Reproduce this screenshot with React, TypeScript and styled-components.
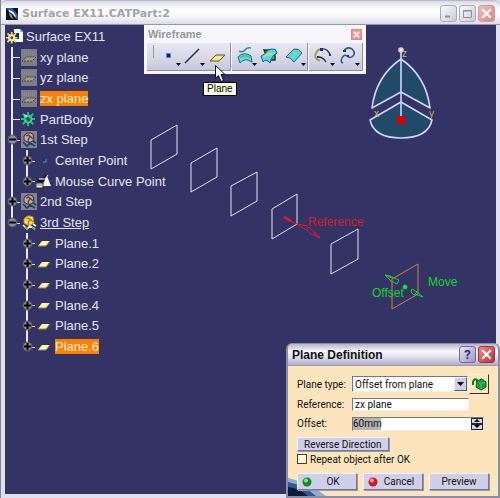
import React from "react";
import styled, { createGlobalStyle, css } from "styled-components";

const GlobalStyle = createGlobalStyle`
  * { box-sizing: border-box; }
  body {
    margin: 0;
    font-family: "Liberation Sans", Arial, sans-serif;
    overflow: hidden;
  }
  button, input, select { font: inherit; color: inherit; margin: 0; padding: 0; }
`;

/* ---------- application window ---------- */

const AppWindow = styled.div`
  position: relative;
  display: flex;
  flex-direction: column;
  height: 100vh;
  background: #dfe0ee;
  border-left: 1px solid #85858b;
  padding: 0 4px 4px;
`;

const TitleBar = styled.header`
  display: flex;
  align-items: center;
  gap: 4px;
  height: 25px;
  flex: none;
  margin: 0 -4px;
  padding: 2px 5px 0 5px;
  border-top: 1px solid #b9b9c4;
  border-bottom: 1px solid #9a9aa5;
  border-radius: 6px 6px 0 0;
  background: linear-gradient(#d9dae6, #ffffff 35%, #f8f8fb 65%, #dcdce6);
`;

const WindowTitle = styled.h1`
  flex: 1;
  margin: 0;
  font-family: "DejaVu Sans", Verdana, sans-serif;
  font-size: 11px;
  line-height: 16px;
  font-weight: bold;
  color: #a2a2a8;
  white-space: nowrap;
`;

const WindowButtons = styled.div`
  display: flex;
  gap: 2px;
`;

const CaptionButton = styled.button<{ $close?: boolean }>`
  display: grid;
  place-items: center;
  width: 17px;
  height: 17px;
  border: 1px solid ${(p) => (p.$close ? "#c99ba3" : "#a9aab8")};
  border-radius: 3px;
  background: ${(p) => (p.$close ? "linear-gradient(135deg, #f0bdbb, #dc8583)" : "linear-gradient(135deg, #fbfbfd, #c9cad8)")};
`;

const Viewport = styled.main`
  position: relative;
  flex: 1;
  min-height: 0;
  padding-left: 1px;
  background: #333366;
`;

/* ---------- specification tree ---------- */

const TreeRoot = styled.div`
  display: flex;
  align-items: center;
  gap: 3px;
  height: 22px;
  color: #e3e3f3;
  font-size: 13px;
`;

const Tree = styled.ul`
  display: grid;
  grid-auto-rows: 1fr;
  height: 310px;
  width: max-content;
  margin: 0;
  padding: 0;
  list-style: none;
`;

const TreeRow = styled.li`
  display: flex;
  align-items: center;
  color: #e3e3f3;
  font-size: 13px;
  line-height: 15px;
`;

const Guide = styled.span<{ $line: "none" | "through" | "tee" | "end" }>`
  position: relative;
  display: flex;
  align-items: center;
  align-self: stretch;
  width: 15px;
  ${(p) =>
    p.$line !== "none" &&
    css`
      &::before {
        content: "";
        position: absolute;
        left: 5px;
        top: 0;
        width: 2px;
        height: ${p.$line === "end" ? "50%" : "100%"};
        background: #e6e6ee;
      }
    `}
  ${(p) =>
    (p.$line === "tee" || p.$line === "end") &&
    css`
      &::after {
        content: "";
        position: absolute;
        left: 6px;
        right: 1px;
        top: 50%;
        height: 1px;
        background: #e6e6ee;
      }
    `}
`;

const Toggle = styled.button`
  position: relative;
  z-index: 1;
  display: flex;
  width: 11px;
  height: 11px;
  margin-left: 1px;
  border: 0;
  border-radius: 50%;
  background: none;
`;

const RowIcon = styled.span`
  display: flex;
  width: 16px;
  margin-right: 3px;
`;

const RowLabel = styled.span<{ $selected?: boolean; $active?: boolean }>`
  white-space: nowrap;
  ${(p) => p.$selected && "background: #ff7f00; color: #fff0dc;"}
  ${(p) => p.$active && "text-decoration: underline;"}
`;

/* ---------- floating toolbar ---------- */

const FloatingToolbar = styled.section`
  position: absolute;
  left: 139px;
  top: 0;
  width: 222px;
  padding: 0 3px 3px;
  background: #f7f7fb;
`;

const ToolbarHeader = styled.div`
  display: flex;
  align-items: center;
  justify-content: space-between;
  height: 18px;
  padding: 0 1px;
  color: #96969c;
  font-size: 11px;
  font-weight: bold;
`;

const ToolbarClose = styled.button`
  display: grid;
  place-items: center;
  width: 11px;
  height: 11px;
  border: 1px solid #d3898a;
  background: #e59a98;
`;

const ToolGroups = styled.div`
  display: grid;
  grid-template-columns: 85fr 77fr 54fr;
  gap: 1px;
`;

const ToolGroup = styled.div<{ $grip?: boolean }>`
  display: flex;
  justify-content: space-around;
  height: 28px;
  padding-left: ${(p) => (p.$grip ? "12px" : "2px")};
  border-right: 1px solid #8e8ea6;
  border-bottom: 1px solid #8e8ea6;
  background: ${(p) =>
    p.$grip
      ? "linear-gradient(#9797ad, #9797ad) 6px 2px / 1px 13px no-repeat, linear-gradient(#e9e9f3, #c8c8dc)"
      : "linear-gradient(#e9e9f3, #c8c8dc)"};
`;

const Tool = styled.button`
  display: flex;
  border: 0;
  background: none;
`;

const ToolTip = styled.div`
  position: absolute;
  left: 198px;
  top: 57px;
  padding: 0 3px;
  border: 1px solid #000;
  background: #ffffe1;
  color: #000;
  font-size: 10px;
  line-height: 12px;
`;

const Cursor = styled.svg`
  position: absolute;
  left: 210px;
  top: 40px;
`;

const Scene = styled.svg`
  position: absolute;
  left: 0;
  top: 0;
  pointer-events: none;
  font-size: 12px;
`;

/* ---------- dialog ---------- */

const Dialog = styled.form`
  position: absolute;
  right: 0;
  bottom: 0;
  width: 214px;
  border: 2px solid #8b8ca6;
  border-top-width: 1px;
  border-radius: 6px 6px 0 0;
  background: #fce4bc;
  overflow: hidden;
  color: #111;
  font-family: "Roboto", "Liberation Sans", sans-serif;
  font-size: 10px;
`;

const DialogHeader = styled.div`
  display: flex;
  align-items: center;
  gap: 2px;
  height: 22px;
  padding: 0 3px 0 4px;
  border-bottom: 1px solid #9a9ab2;
  background: linear-gradient(#b4b4cb, #f8f8fc 35%, #e3e3ee 60%, #adadc6);
`;

const DialogTitle = styled.h2`
  flex: 1;
  margin: 0;
  font-family: "Liberation Sans", Arial, sans-serif;
  font-size: 12px;
  white-space: nowrap;
`;

const DialogButton = styled.button<{ $close?: boolean }>`
  display: grid;
  place-items: center;
  width: 17px;
  height: 17px;
  border: 1px solid ${(p) => (p.$close ? "#a03038" : "#6c6c98")};
  border-radius: 3px;
  background: ${(p) => (p.$close ? "linear-gradient(135deg, #ee8b88, #c22e32)" : "linear-gradient(135deg, #e6e6f6, #9a9ac6)")};
  color: #30306c;
  font-size: 13px;
  font-weight: bold;
  line-height: 14px;
`;

const DialogBody = styled.div`
  position: relative;
  display: flex;
  flex-direction: column;
  padding: 8px 9px 6px;
`;

const Fields = styled.div`
  display: grid;
  grid-template-columns: 55px 1fr 20px;
  grid-template-rows: 20px 21px 17px;
  align-items: center;
`;

const FieldLabel = styled.label`
  white-space: nowrap;
`;

const sunken = css`
  border: 1px solid;
  border-color: #77777c #f4f0e0 #f4f0e0 #77777c;
  background: #fff;
`;

const SelectBox = styled.div`
  position: relative;
  display: flex;
  margin-right: 1px;
`;

const SelectInput = styled.select`
  ${sunken}
  appearance: none;
  width: 100%;
  height: 16px;
  padding: 0 14px 0 2px;
  border-radius: 0;
`;

const SelectArrow = styled.span`
  position: absolute;
  right: 1px;
  top: 1px;
  display: grid;
  place-items: center;
  width: 13px;
  height: 14px;
  border: 1px solid;
  border-color: #f3f3fc #55556c #55556c #f3f3fc;
  background: #cfcfe6;
  pointer-events: none;
`;

const BodyButton = styled.button`
  display: grid;
  place-items: center;
  width: 20px;
  height: 20px;
  border: 1px solid;
  border-color: #fff6df #33312c #33312c #fff6df;
  background: #fce4bc;
`;

const ReferenceInput = styled.input`
  ${sunken}
  grid-column: 2 / 4;
  min-width: 0;
  height: 13px;
  margin-right: 20px;
  padding: 0 2px;
`;

const SpinBox = styled.div`
  ${sunken}
  grid-column: 2 / 4;
  display: flex;
  height: 14px;
  margin-right: 5px;
`;

const SpinInput = styled.input`
  flex: 1;
  min-width: 0;
  width: 0;
  border: 0;
  background: linear-gradient(#b4b4b8, #b4b4b8) 0 0 / 28px 100% no-repeat;
`;

const SpinButtons = styled.div`
  display: flex;
  flex-direction: column;
  width: 12px;
`;

const SpinButton = styled.button`
  display: grid;
  place-items: center;
  flex: 1;
  border: 1px solid #222;
  background: #d6d6e8;
`;

const PushButton = styled.button<{ $lamp?: boolean }>`
  display: flex;
  align-items: center;
  justify-content: center;
  position: relative;
  height: 17px;
  padding-left: ${(p) => (p.$lamp ? "12px" : "0")};
  border: 1px solid;
  border-color: #f2f2fd #77779b #77779b #f2f2fd;
  background: #cfcfe9;
  box-shadow: 1px 1px 0 #9a93a4;
  white-space: nowrap;
`;

const ReverseButton = styled(PushButton)`
  align-self: flex-start;
  height: 14px;
  padding: 0 6px;
  margin: 5px 0 2px;
`;

const CheckRow = styled.label`
  display: flex;
  align-items: center;
  gap: 3px;
  height: 12px;
`;

const CheckBox = styled.input`
  appearance: none;
  width: 10px;
  height: 10px;
  border: 1px solid #44443f;
  background: #fff9e0;
`;

const DialogActions = styled.div`
  display: grid;
  grid-template-columns: repeat(3, 1fr);
  gap: 6px;
  margin-top: 8px;
`;

const Lamp = styled.svg`
  position: absolute;
  left: 4px;
  top: 3px;
`;

const CornerArt = styled.svg`
  position: absolute;
  left: 0;
  bottom: 0;
`;

/* ---------- icons ---------- */

const CatiaIcon = () => (
  <svg width="12" height="12" viewBox="0 0 12 12">
    <rect width="12" height="12" fill="#08142c" />
    <path d="M0 0 H6 L12 7 V12 L4 5 Z" fill="#2463a0" />
    <path d="M3 2 Q9 3 10 10 Q6 4 3 4Z" fill="#f5f4e4" />
    <path d="M3 5 Q6 6 7 11 Q3 9 3 5Z" fill="#d98030" />
  </svg>
);

const Cross = ({ size = 9 }: { size?: number }) => (
  <svg width={size} height={size} viewBox="0 0 9 9">
    <path d="M1 1 L8 8 M8 1 L1 8" stroke="#fff" strokeWidth="1.8" />
  </svg>
);

const gear = "M8 0 V16 M0 8 H16 M2 2 L14 14 M14 2 L2 14";

const RootIcon = () => (
  <svg width="17" height="17" viewBox="0 0 17 17">
    <path d="M8 1 H14 L17 4 V14 H8Z" fill="#fafdff" />
    <path d="M14 1 V4 H17" fill="#5bc8dc" />
    <path d="M8 5 H13 V11 H8Z" fill="#182840" />
    <g transform="translate(0 4) scale(.72)">
      <path d={gear} stroke="#f1dc76" strokeWidth="2.4" />
      <circle cx="8" cy="8" r="5" fill="#f6e9a0" />
      <circle cx="8" cy="8" r="2" fill="#4d4740" />
    </g>
  </svg>
);

const RefPlaneIcon = () => (
  <svg width="16" height="17" viewBox="0 0 16 17">
    <rect width="16" height="17" fill="#7c7d88" />
    <path d="M1 12 L6 8 H15 L11 12Z" fill="#a59e78" stroke="#3c3d42" strokeDasharray="2 1" />
    <path d="M1 5 H15 M1 3 H15" stroke="#90919a" strokeDasharray="1 1" />
  </svg>
);

const BodyIcon = () => (
  <svg width="14" height="14" viewBox="0 0 16 16">
    <path d={gear} stroke="#27b987" strokeWidth="2.2" />
    <circle cx="8" cy="8" r="5" fill="#35cf94" />
    <path d="M8 5 V11 M5 8 H11 M6 6 L10 10" stroke="#063f38" strokeWidth="1.4" />
    <path d="M4 3 L7 6" stroke="#baffdf" strokeWidth="1.6" />
  </svg>
);

const StepIcon = ({ active }: { active?: boolean }) => (
  <svg width="16" height="17" viewBox="0 0 16 17">
    {!active && <rect width="16" height="17" fill="#83838f" />}
    <path d="M3 5 Q6 0 12 3 L13 9 L8 12 L3 9Z" fill={active ? "#ffe36a" : "#b6aeb0"} stroke={active ? "#c28a20" : "#303040"} />
    <path d="M5 5 Q8 3 9 6 Q6 9 8 11 M9 5 L12 8" fill="none" stroke={active ? "#d7681e" : "#7c3328"} strokeWidth="1.4" />
    <path d="M2 11 L6 15 L9 12 L14 15 M12 10 L15 12" fill="none" stroke={active ? "#fff3b0" : "#263c5c"} strokeWidth="1.6" />
    {active && <path d="M4 13 L7 16 M11 13 L14 16" stroke="#5b9b90" strokeWidth="1.4" />}
  </svg>
);

const PointIcon = () => (
  <svg width="16" height="14" viewBox="0 0 16 14">
    <rect x="7" y="5" width="3" height="3" fill="#0c3470" />
    <path d="M10 5 V8 H7" fill="none" stroke="#4c9cc8" />
  </svg>
);

const MouseCurveIcon = () => (
  <svg width="16" height="15" viewBox="0 0 16 15">
    <path d="M6 12 L11 2 L15 12Z" fill="#fff" />
    <path d="M1 7 H7 L10 1" fill="none" stroke="#111" strokeWidth="2" />
    <path d="M3 5 L9 5 L12 1" fill="none" stroke="#fff" />
    <rect x="0" y="9" width="7" height="5" fill="#f5f5f5" stroke="#222" />
    <path d="M1 11 H6" stroke="#777" />
  </svg>
);

const PlaneIcon = () => (
  <svg width="16" height="12" viewBox="0 0 16 12">
    <path d="M2 9 L6 4 H14 L10 9Z" fill="#fff7a0" />
    <path d="M2 9 H10 L14 4" fill="none" stroke="#8b8750" />
  </svg>
);

const ToggleIcon = ({ open }: { open?: boolean }) => (
  <svg width="11" height="11" viewBox="0 0 11 11">
    <circle cx="5.5" cy="5.5" r="4.5" fill="#8a8a92" stroke="#55555e" />
    <path d={open ? "M2 5.5 H9" : "M2 5.5 H9 M5.5 2 V9"} stroke="#050508" strokeWidth="2" />
  </svg>
);

const Drop = () => <path d="M17 20 H22 L19.5 23Z" fill="#0a0a14" />;

const toolArt: Record<string, React.ReactNode> = {
  Point: (
    <>
      <rect x="7" y="10" width="5" height="5" fill="#4c93c6" />
      <rect x="8" y="11" width="3" height="3" fill="#06265c" />
      <Drop />
    </>
  ),
  Line: (
    <>
      <path d="M2 20 L16 6" stroke="#16305f" strokeWidth="1.4" />
      <Drop />
    </>
  ),
  Plane: <path d="M3 18 L9 12 H18 L12 18Z" fill="#fbe96e" stroke="#59553a" />,
  Projection: (
    <>
      <path d="M4 8 Q8 10 10 7 T16 5" fill="none" stroke="#2a8f94" strokeWidth="1.4" />
      <path d="M3 14 Q9 8 16 13 L17 19 Q10 14 5 20Z" fill="#5ee4ec" stroke="#1957b8" />
      <path d="M5 15 Q10 11 15 15" fill="none" stroke="#62c255" strokeWidth="2" />
      <Drop />
    </>
  ),
  Intersection: (
    <>
      <path d="M5 7 H16 V17 H9Z" fill="#5ba794" stroke="#182c35" strokeWidth="1.4" />
      <path d="M2 13 Q6 12 9 7 Q17 4 18 10 Q13 12 11 20 Q7 15 4 19Z" fill="#4fd7f0" stroke="#1957b8" />
      <path d="M5 14 Q9 9 14 12" fill="none" stroke="#c6de4f" strokeWidth="2" />
    </>
  ),
  Parallel: (
    <>
      <path d="M2 14 L10 6 Q15 5 18 10 L10 19 Q7 14 2 14Z" fill="#54daee" stroke="#1957b8" />
      <path d="M5 14 L12 7 M8 16 L15 9" stroke="#85d474" strokeWidth="1.6" />
      <Drop />
    </>
  ),
  Circle: (
    <>
      <path d="M7 18 Q0 15 3 10 Q5 6 9 6" fill="none" stroke="#a19947" strokeWidth="1.8" />
      <path d="M8 6 Q15 5 17 12" fill="none" stroke="#18375e" strokeWidth="1.4" />
      <path d="M5 14 Q10 14 13 19" fill="none" stroke="#18375e" strokeWidth="1.4" />
      <path d="M7 5 H10 V8 H7Z M16 11 H18 V13 H16Z M4 13 H6 V15 H4Z" fill="#1d2f91" />
      <Drop />
    </>
  ),
  Spline: (
    <>
      <path d="M6 8 Q9 3 14 6 Q18 10 15 13 Q12 16 9 13 Q6 11 4 15 Q2 19 5 20" fill="none" stroke="#24578f" strokeWidth="1.5" />
      <path d="M5 7 H8 V9 H5Z M9 12 H11 V14 H9Z" fill="#1d2f91" />
      <Drop />
    </>
  ),
};

const ToolButton = ({ name }: { name: string }) => (
  <Tool type="button" aria-label={name}>
    <svg width="23" height="27" viewBox="0 0 23 27">{toolArt[name]}</svg>
  </Tool>
);

/* ---------- data ---------- */

type Line = "none" | "through" | "tee" | "end";
type Node = {
  label: string;
  icon: React.ReactNode;
  guides: Line[];
  toggle?: "open" | "closed";
  selected?: boolean;
  active?: boolean;
};

const nodes: Node[] = [
  { label: "xy plane", icon: <RefPlaneIcon />, guides: ["tee"] },
  { label: "yz plane", icon: <RefPlaneIcon />, guides: ["tee"] },
  { label: "zx plane", icon: <RefPlaneIcon />, guides: ["tee"], selected: true },
  { label: "PartBody", icon: <BodyIcon />, guides: ["tee"] },
  { label: "1st Step", icon: <StepIcon />, guides: ["tee"], toggle: "open" },
  { label: "Center Point", icon: <PointIcon />, guides: ["through", "tee"], toggle: "closed" },
  { label: "Mouse Curve Point", icon: <MouseCurveIcon />, guides: ["through", "end"], toggle: "closed" },
  { label: "2nd Step", icon: <StepIcon />, guides: ["tee"], toggle: "closed" },
  { label: "3rd Step", icon: <StepIcon active />, guides: ["end"], toggle: "open", active: true },
  ...[1, 2, 3, 4, 5, 6].map(
    (n): Node => ({
      label: `Plane.${n}`,
      icon: <PlaneIcon />,
      guides: ["none", n === 6 ? "end" : "tee"],
      toggle: "closed",
      selected: n === 6,
    })
  ),
];

const framePlanes = [
  "151,140 177,125 177,154 151,169",
  "191,163 217,148 217,177 191,192",
  "231,186 257,172 257,201 231,216",
  "272,209 297,194 297,224 272,239",
  "331,244 358,229 358,259 331,274",
];

const SceneDrawing = () => (
  <Scene width="490" height="469" viewBox="5 25 490 469">
    {framePlanes.map((points) => (
      <polygon key={points} points={points} fill="none" stroke="#e4e4f0" />
    ))}
    <g stroke="#d51c2c" fill="none">
      <path d="M284 217 L291 221" strokeWidth="3" />
      <path d="M290 221 L297 224 L308 226 M297 224 L306 230 M314 234 L320 237" />
      <path d="M306 229 L309 227 L315 233 L312 235 Z M315 233 L320 238 L314 235" />
    </g>
    <text x="308" y="226" fill="#d51c2c">Reference</text>
    <polygon points="392,279 418,264 418,294 392,309" fill="none" stroke="#d08048" />
    <g stroke="#10d62c" fill="none">
      <path d="M385 275 L390 276 L399 280 L397 284 L391 281 Z M385 275 L392 278" />
      <path d="M412 289 L417 292 L414 295 L411 292 Z M416 291 L423 297 L415 294" />
      <circle cx="405" cy="287" r="2" fill="#10f02c" />
    </g>
    <text x="372" y="297" fill="#10d62c">Offset</text>
    <text x="428" y="286" fill="#10d62c">Move</text>
    <g stroke="#d3d3ff" strokeWidth="1.6" fill="#204a68" strokeLinejoin="round">
      <path d="M401 59 Q376 76 372 108 L401 92 L430 108 Q426 76 401 59Z" />
      <path d="M401 102 L370 120 Q374 138 401 138 Q428 138 432 120Z" />
      <path d="M401 50 V118" />
      <circle cx="401" cy="50" r="2" fill="#eeeeff" />
    </g>
    <rect x="397" y="116" width="8" height="8" fill="#d60000" />
    <g fill="#c9bb45" fontSize="10">
      <text x="402" y="57">z</text>
      <text x="374" y="117">x</text>
      <text x="429" y="117">y</text>
    </g>
  </Scene>
);

const LampIcon = ({ tone }: { tone: "green" | "red" }) => (
  <Lamp width="10" height="10" viewBox="0 0 10 10">
    <circle cx="5" cy="5" r="4.5" fill={tone === "green" ? "#148a22" : "#c81f1f"} />
    <circle cx="4" cy="3.5" r="2" fill={tone === "green" ? "#8fe08c" : "#ff9d8c"} />
  </Lamp>
);

export default function App() {
  return (
    <AppWindow>
      <GlobalStyle />
      <TitleBar>
        <CatiaIcon />
        <WindowTitle>Surface EX11.CATPart:2</WindowTitle>
        <WindowButtons>
          <CaptionButton type="button" aria-label="Minimize">
            <svg width="9" height="9"><path d="M1 7.5 H6" stroke="#8f909c" strokeWidth="2" /></svg>
          </CaptionButton>
          <CaptionButton type="button" aria-label="Maximize">
            <svg width="9" height="9"><path d="M.5 1.5 H8.5 V8.5 H.5Z M.5 2 H8.5" fill="none" stroke="#8f909c" /></svg>
          </CaptionButton>
          <CaptionButton type="button" aria-label="Close" $close><Cross size={11} /></CaptionButton>
        </WindowButtons>
      </TitleBar>

      <Viewport>
        <TreeRoot><RootIcon />Surface EX11</TreeRoot>
        <Tree>
          {nodes.map((node) => (
            <TreeRow key={node.label}>
              {node.guides.map((line, i) => (
                <Guide key={i} $line={line}>
                  {node.toggle && i === node.guides.length - 1 && (
                    <Toggle type="button" aria-label={`Toggle ${node.label}`}>
                      <ToggleIcon open={node.toggle === "open"} />
                    </Toggle>
                  )}
                </Guide>
              ))}
              <RowIcon>{node.icon}</RowIcon>
              <RowLabel $selected={node.selected} $active={node.active}>{node.label}</RowLabel>
            </TreeRow>
          ))}
        </Tree>

        <SceneDrawing />

        <FloatingToolbar aria-label="Wireframe">
          <ToolbarHeader>
            Wireframe
            <ToolbarClose type="button" aria-label="Close toolbar"><Cross size={7} /></ToolbarClose>
          </ToolbarHeader>
          <ToolGroups>
            <ToolGroup $grip>
              <ToolButton name="Point" />
              <ToolButton name="Line" />
              <ToolButton name="Plane" />
            </ToolGroup>
            <ToolGroup>
              <ToolButton name="Projection" />
              <ToolButton name="Intersection" />
              <ToolButton name="Parallel" />
            </ToolGroup>
            <ToolGroup>
              <ToolButton name="Circle" />
              <ToolButton name="Spline" />
            </ToolGroup>
          </ToolGroups>
        </FloatingToolbar>
        <ToolTip role="tooltip">Plane</ToolTip>
        <Cursor width="11" height="18" viewBox="0 0 11 18">
          <path d="M.5 .5 V13 L3.5 10.5 L6 16.5 L8.5 15.5 L6 9.5 H10Z" fill="#fff" stroke="#111" />
        </Cursor>
      </Viewport>

      <Dialog onSubmit={(e) => e.preventDefault()}>
        <DialogHeader>
          <DialogTitle>Plane Definition</DialogTitle>
          <DialogButton type="button" aria-label="Help">?</DialogButton>
          <DialogButton type="button" aria-label="Close dialog" $close><Cross size={11} /></DialogButton>
        </DialogHeader>
        <DialogBody>
          <CornerArt width="38" height="18" viewBox="0 0 38 18">
            <path d="M0 0 Q20 4 38 18 H0Z" fill="#8fb0c4" />
            <path d="M0 4 Q16 7 28 18 H0Z" fill="#2d5f96" />
            <path d="M0 9 Q12 10 20 18 H0Z" fill="#0b1c3c" />
          </CornerArt>
          <Fields>
            <FieldLabel htmlFor="type">Plane type:</FieldLabel>
            <SelectBox>
              <SelectInput id="type" defaultValue="offset">
                <option value="offset">Offset from plane</option>
              </SelectInput>
              <SelectArrow><svg width="7" height="4"><path d="M0 0 H7 L3.5 4Z" fill="#000" /></svg></SelectArrow>
            </SelectBox>
            <BodyButton type="button" aria-label="Lock plane">
              <svg width="16" height="14" viewBox="0 0 16 14">
                <path d="M6 4 L11 2 L15 5 V10 L10 13 L5 10Z" fill="#1d9b35" stroke="#0a5c1c" />
                <path d="M6 5 L10 7 L14 5 M10 7 V12" fill="none" stroke="#4fc060" />
                <path d="M2 8 V5 Q3 1 6 3 V7" fill="none" stroke="#137a28" strokeWidth="2" />
              </svg>
            </BodyButton>
            <FieldLabel htmlFor="reference">Reference:</FieldLabel>
            <ReferenceInput id="reference" defaultValue="zx plane" />
            <FieldLabel htmlFor="offset">Offset:</FieldLabel>
            <SpinBox>
              <SpinInput id="offset" defaultValue="60mm" />
              <SpinButtons>
                <SpinButton type="button" aria-label="Increase"><svg width="6" height="3"><path d="M0 3 L3 0 L6 3Z" /></svg></SpinButton>
                <SpinButton type="button" aria-label="Decrease"><svg width="6" height="3"><path d="M0 0 H6 L3 3Z" /></svg></SpinButton>
              </SpinButtons>
            </SpinBox>
          </Fields>
          <ReverseButton type="button">Reverse Direction</ReverseButton>
          <CheckRow><CheckBox type="checkbox" />Repeat object after OK</CheckRow>
          <DialogActions>
            <PushButton type="submit" $lamp><LampIcon tone="green" />OK</PushButton>
            <PushButton type="button" $lamp><LampIcon tone="red" />Cancel</PushButton>
            <PushButton type="button">Preview</PushButton>
          </DialogActions>
        </DialogBody>
      </Dialog>
    </AppWindow>
  );
}
